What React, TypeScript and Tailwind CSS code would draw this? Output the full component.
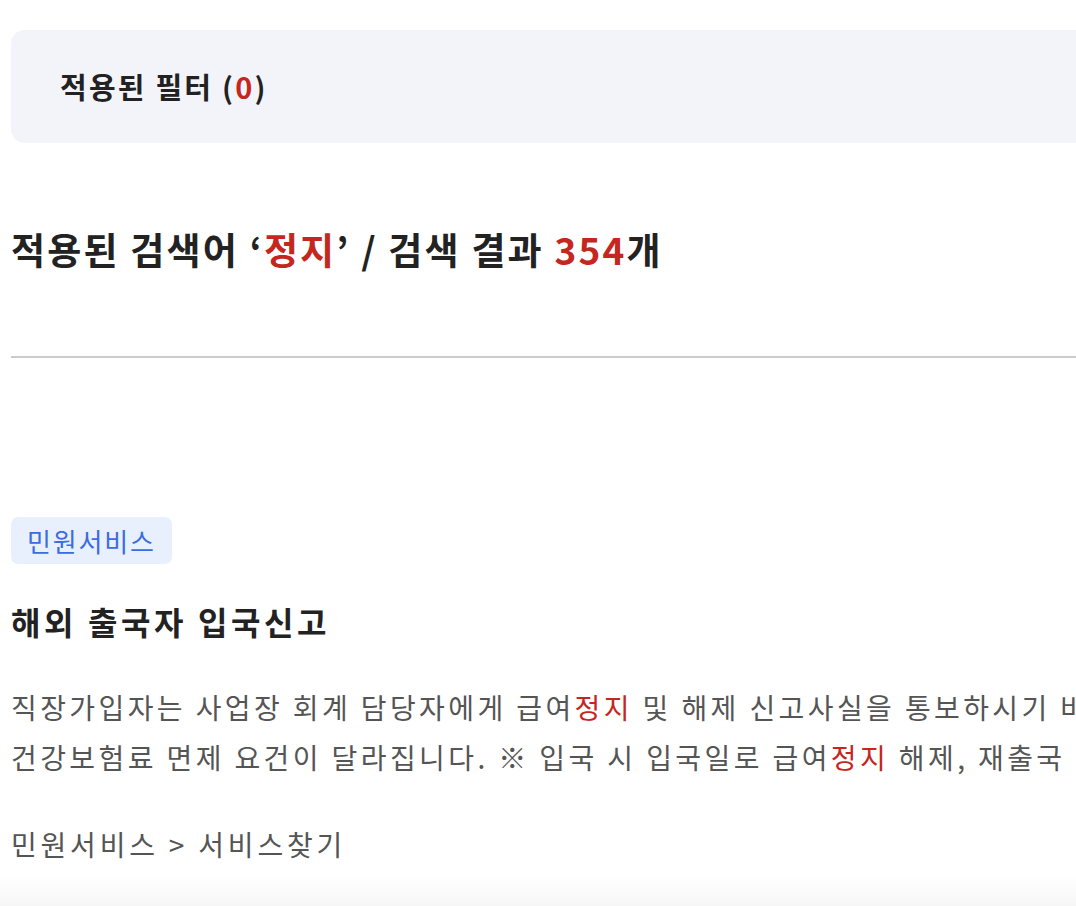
import React from 'react';

const font = { fontFamily: '"Noto Sans CJK KR", "Noto Sans", sans-serif' };

const Hl = ({ children }: { children: React.ReactNode }) => (
  <span className="text-[#c4271e]">{children}</span>
);

export default function App() {
  return (
    <div
      className="relative h-[906px] w-full overflow-hidden bg-white text-[#222]"
      style={font}
    >
      <div className="w-[1600px] pl-[11px] pt-[30px]">
        {/* applied filters */}
        <div className="flex h-[113px] items-center rounded-[14px] bg-[#f3f4f9] pl-[49px]">
          <span className="text-[29px] font-bold leading-none tracking-[2.2px]">
            적용된 필터 (<Hl>0</Hl>)
          </span>
        </div>

        {/* search summary */}
        <h2 className="mt-[81px] text-[37px] font-bold leading-[50px] tracking-[2.2px]">
          적용된 검색어 ‘<Hl>정지</Hl>’ / 검색 결과 <Hl>354</Hl>개
        </h2>

        <div className="mt-[82px] h-[2px] bg-[#cbcbcb]" />

        {/* result item */}
        <div className="mt-[159px]">
          <span className="inline-flex h-[47px] items-center rounded-[7px] bg-[#e9f0fd] px-[16px] text-[26px] leading-none tracking-[1.8px] text-[#3b6ce0]">
            민원서비스
          </span>
          <h3 className="mt-[35px] text-[32px] font-bold leading-[44px] tracking-[3.6px]">
            해외 출국자 입국신고
          </h3>
          <p className="mt-[39px] whitespace-nowrap text-[28px] leading-[50px] tracking-[3.4px] text-[#555]">
            직장가입자는 사업장 회계 담당자에게 급여<Hl>정지</Hl> 및 해제 신고사실을 통보하시기 바랍니다.
            <br />
            건강보험료 면제 요건이 달라집니다. ※ 입국 시 입국일로 급여<Hl>정지</Hl> 해제, 재출국 시 출국일로
          </p>
          <p className="mt-[37px] text-[28px] leading-[50px] tracking-[3.8px] text-[#555]">
            민원서비스 &gt; 서비스찾기
          </p>
        </div>
      </div>

      {/* bottom fade */}
      <div className="pointer-events-none absolute inset-x-0 bottom-0 h-[30px] bg-gradient-to-b from-white to-[#f6f6f6]" />
    </div>
  );
}
